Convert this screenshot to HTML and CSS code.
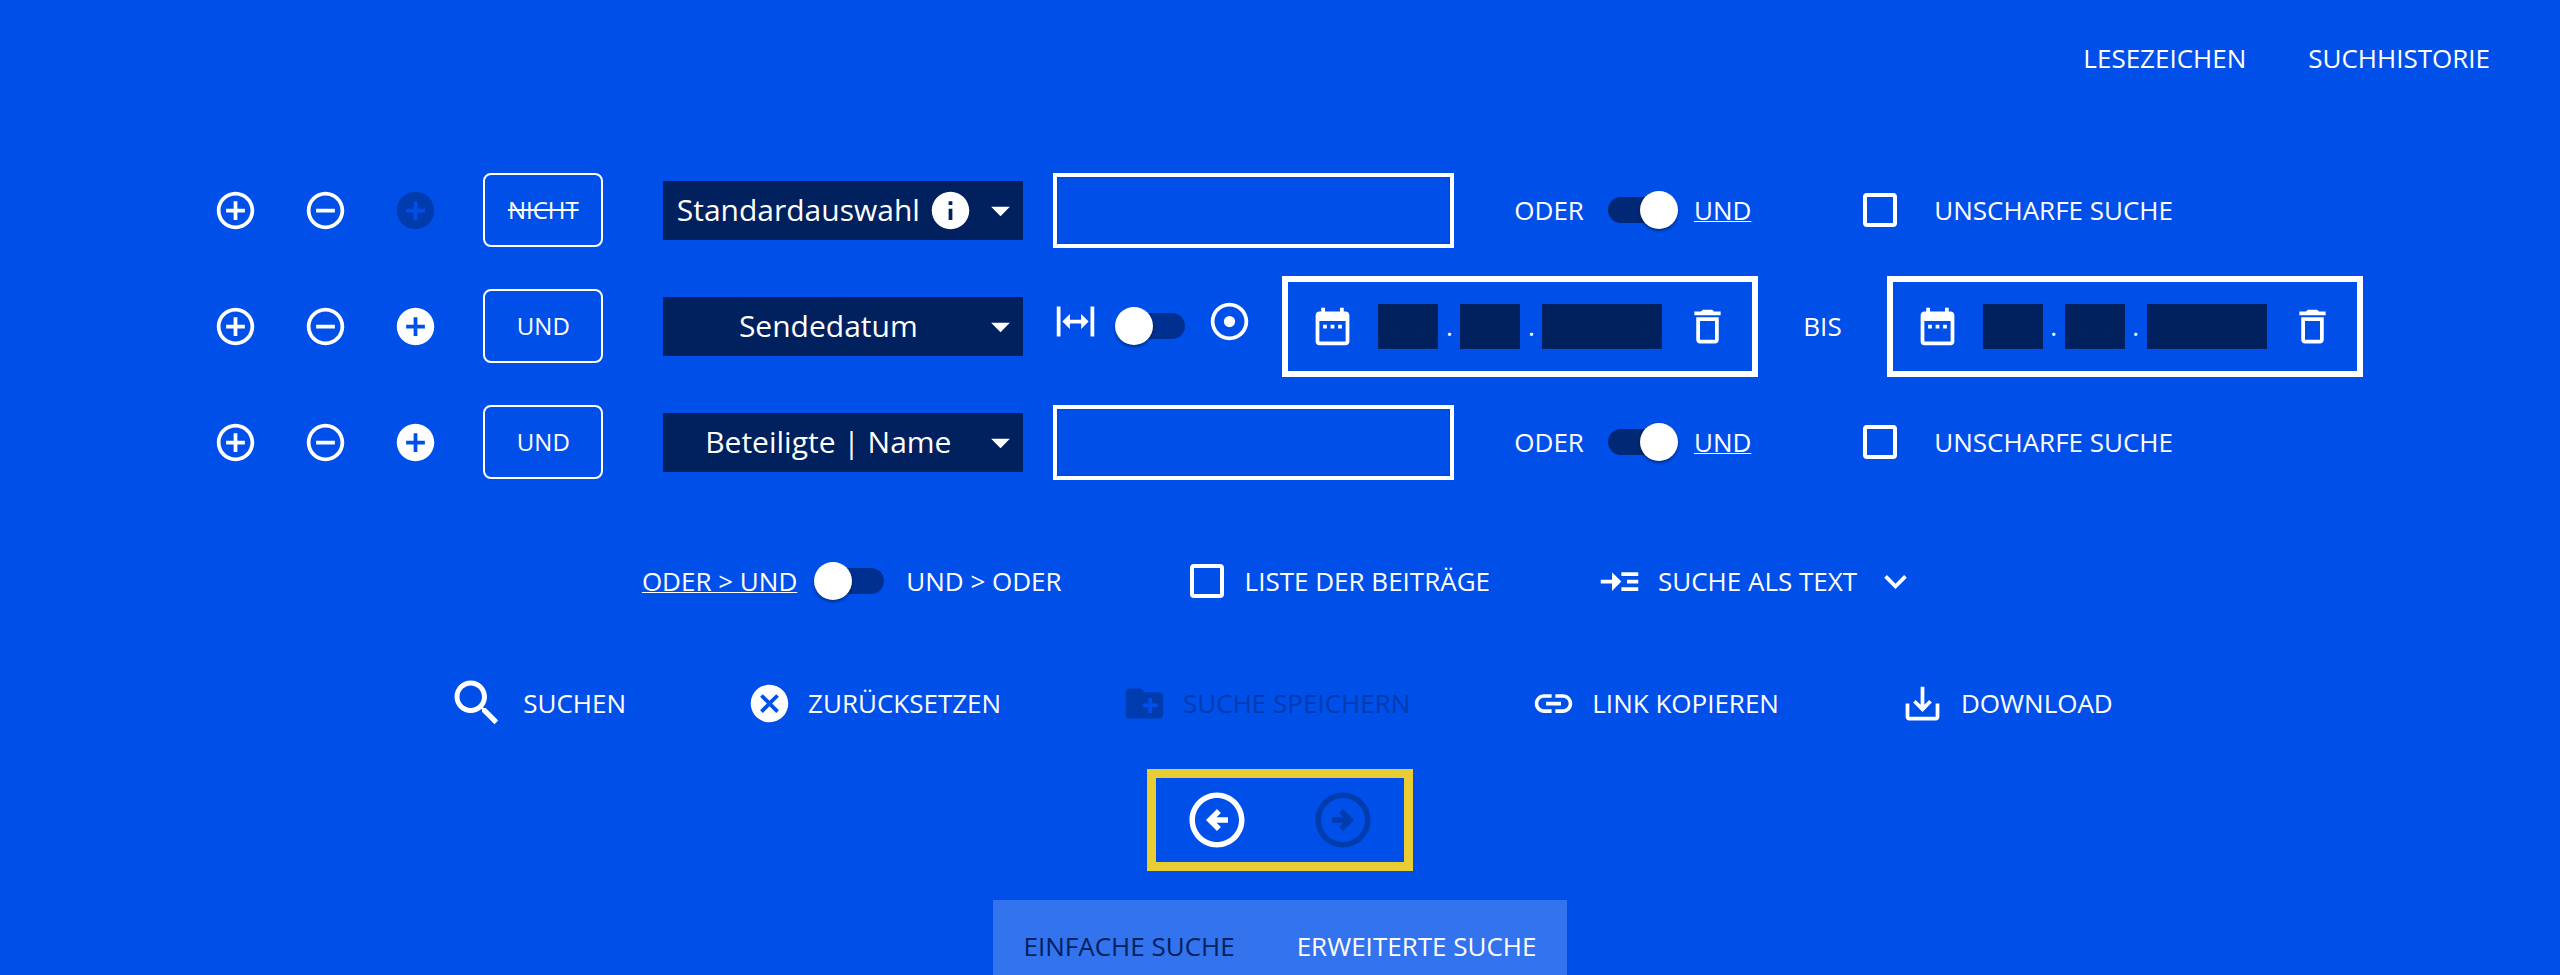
FILE: index.html
```html
<!DOCTYPE html>
<html lang="de">
<head>
    <meta charset="UTF-8">
    <meta name="viewport" content="width=device-width, initial-scale=1.0">
    <title>Erweiterte Suche</title>
    <link rel="stylesheet" href="styles.css">
</head>
<body>
    <svg class="sprite" aria-hidden="true">
        <symbol id="plus-outline" viewBox="0 0 24 24"><path d="M13 7h-2v4H7v2h4v4h2v-4h4v-2h-4V7zm-1-5C6.48 2 2 6.48 2 12s4.48 10 10 10 10-4.48 10-10S17.52 2 12 2zm0 18c-4.41 0-8-3.59-8-8s3.59-8 8-8 8 3.59 8 8-3.59 8-8 8z"/></symbol>
        <symbol id="minus-outline" viewBox="0 0 24 24"><path d="M7 11v2h10v-2H7zm5-9C6.48 2 2 6.48 2 12s4.48 10 10 10 10-4.48 10-10S17.52 2 12 2zm0 18c-4.41 0-8-3.59-8-8s3.59-8 8-8 8 3.59 8 8-3.59 8-8 8z"/></symbol>
        <symbol id="plus-filled" viewBox="0 0 24 24"><path d="M12 2C6.48 2 2 6.48 2 12s4.48 10 10 10 10-4.48 10-10S17.52 2 12 2zm5 11h-4v4h-2v-4H7v-2h4V7h2v4h4v2z"/></symbol>
        <symbol id="info" viewBox="0 0 24 24"><path d="M12 2C6.48 2 2 6.48 2 12s4.48 10 10 10 10-4.48 10-10S17.52 2 12 2zm1 15h-2v-6h2v6zm0-8h-2V7h2v2z"/></symbol>
        <symbol id="drop-down" viewBox="0 0 24 24"><path d="M7 10l5 5 5-5z"/></symbol>
        <symbol id="range" viewBox="0 0 24 24"><path d="M9 11h6V8l4 4-4 4v-3H9v3l-4-4 4-4v3zM2 20V4h2v16H2zm18 0V4h2v16h-2z"/></symbol>
        <symbol id="target" viewBox="0 0 24 24"><path d="M12 2C6.48 2 2 6.48 2 12s4.48 10 10 10 10-4.48 10-10S17.52 2 12 2zm0 18c-4.41 0-8-3.59-8-8s3.59-8 8-8 8 3.59 8 8-3.59 8-8 8z"/><circle cx="12" cy="12" r="3"/></symbol>
        <symbol id="calendar" viewBox="0 0 24 24"><path d="M9 11H7v2h2v-2zm4 0h-2v2h2v-2zm4 0h-2v2h2v-2zm2-7h-1V2h-2v2H8V2H6v2H5c-1.11 0-1.99.9-1.99 2L3 20c0 1.1.89 2 2 2h14c1.1 0 2-.9 2-2V6c0-1.1-.9-2-2-2zm0 16H5V9h14v11z"/></symbol>
        <symbol id="trash" viewBox="0 0 24 24"><path d="M6 19c0 1.1.9 2 2 2h8c1.1 0 2-.9 2-2V7H6v12zM8 9h8v10H8V9zm7.5-5l-1-1h-5l-1 1H5v2h14V4h-3.5z"/></symbol>
        <symbol id="as-text" viewBox="0 0 24 24"><path d="M22 7h-9v2h9V7zm0 8h-9v2h9v-2zm0-4h-6v2h6v-2zm-9 1L8 7v4H2v2h6v4l5-5z"/></symbol>
        <symbol id="chevron" viewBox="0 0 24 24"><path d="M16.59 8.59L12 13.17 7.41 8.59 6 10l6 6 6-6z"/></symbol>
        <symbol id="search" viewBox="0 0 24 24"><path d="M15.5 14h-.79l-.28-.27C15.41 12.59 16 11.11 16 9.5 16 5.91 13.09 3 9.5 3S3 5.91 3 9.5 5.91 16 9.5 16c1.61 0 3.09-.59 4.23-1.57l.27.28v.79l5 4.99L20.49 19l-4.99-5zm-6 0C7.01 14 5 11.99 5 9.5S7.01 5 9.5 5 14 7.01 14 9.5 11.99 14 9.5 14z"/></symbol>
        <symbol id="cancel" viewBox="0 0 24 24"><path d="M12 2C6.47 2 2 6.47 2 12s4.47 10 10 10 10-4.47 10-10S17.53 2 12 2zm5 13.59L15.59 17 12 13.41 8.41 17 7 15.59 10.59 12 7 8.41 8.41 7 12 10.59 15.59 7 17 8.41 13.41 12 17 15.59z"/></symbol>
        <symbol id="folder" viewBox="0 0 24 24"><path d="M20 6h-8l-2-2H4c-1.11 0-1.99.89-1.99 2L2 18c0 1.11.89 2 2 2h16c1.11 0 2-.89 2-2V8c0-1.11-.89-2-2-2zm-1 8h-3v3h-2v-3h-3v-2h3V9h2v3h3v2z"/></symbol>
        <symbol id="link" viewBox="0 0 24 24"><path d="M3.9 12c0-1.71 1.39-3.1 3.1-3.1h4V7H7c-2.76 0-5 2.24-5 5s2.24 5 5 5h4v-1.9H7c-1.71 0-3.1-1.39-3.1-3.1zM8 13h8v-2H8v2zm9-6h-4v1.9h4c1.71 0 3.1 1.39 3.1 3.1s-1.39 3.1-3.1 3.1h-4V17h4c2.76 0 5-2.24 5-5s-2.24-5-5-5z"/></symbol>
        <symbol id="download" viewBox="0 0 24 24"><path d="M19 12v7H5v-7H3v7c0 1.1.9 2 2 2h14c1.1 0 2-.9 2-2v-7h-2zm-6 .67l2.59-2.58L17 11.5l-5 5-5-5 1.41-1.41L11 12.67V3h2z"/></symbol>
        <symbol id="arrow-left" viewBox="0 0 24 24"><path d="M2 12c0 5.52 4.48 10 10 10s10-4.48 10-10S17.52 2 12 2 2 6.48 2 12zm18 0c0 4.42-3.58 8-8 8s-8-3.58-8-8 3.58-8 8-8 8 3.58 8 8zM8 12l4-4 1.41 1.41L11.83 11H16v2h-4.17l1.59 1.59L12 16l-4-4z"/></symbol>
        <symbol id="arrow-right" viewBox="0 0 24 24"><path d="M22 12c0-5.52-4.48-10-10-10S2 6.48 2 12s4.48 10 10 10 10-4.48 10-10zM4 12c0-4.42 3.58-8 8-8s8 3.58 8 8-3.58 8-8 8-8-3.58-8-8zm12 0l-4 4-1.41-1.41L12.17 13H8v-2h4.17l-1.59-1.59L12 8l4 4z"/></symbol>
    </svg>

    <nav class="top-nav">
        <a href="#lesezeichen">LESEZEICHEN</a>
        <a href="#suchhistorie">SUCHHISTORIE</a>
    </nav>

    <main>
        <form class="search-form" onsubmit="return false">
            <div class="row">
                <div class="row-buttons">
                    <button type="button" class="icon-btn" aria-label="Zeile hinzufügen"><svg><use href="#plus-outline"/></svg></button>
                    <button type="button" class="icon-btn" aria-label="Zeile entfernen"><svg><use href="#minus-outline"/></svg></button>
                    <button type="button" class="icon-btn" aria-label="Gruppe hinzufügen" disabled><svg><use href="#plus-filled"/></svg></button>
                </div>
                <button type="button" class="operator off">NICHT</button>
                <div class="field-select">
                    <select class="with-info" aria-label="Suchfeld 1"><option>Standardauswahl</option></select>
                    <svg class="info"><use href="#info"/></svg>
                    <svg class="arrow"><use href="#drop-down"/></svg>
                </div>
                <input type="text" class="term" aria-label="Suchbegriff 1">
                <div class="term-operator">
                    <label for="op1">ODER</label>
                    <input type="checkbox" class="switch" id="op1" checked>
                    <label for="op1" class="active">UND</label>
                </div>
                <div class="fuzzy">
                    <input type="checkbox" class="check" id="fuzzy1">
                    <label for="fuzzy1">UNSCHARFE SUCHE</label>
                </div>
            </div>

            <div class="row">
                <div class="row-buttons">
                    <button type="button" class="icon-btn" aria-label="Zeile hinzufügen"><svg><use href="#plus-outline"/></svg></button>
                    <button type="button" class="icon-btn" aria-label="Zeile entfernen"><svg><use href="#minus-outline"/></svg></button>
                    <button type="button" class="icon-btn" aria-label="Gruppe hinzufügen"><svg><use href="#plus-filled"/></svg></button>
                </div>
                <button type="button" class="operator">UND</button>
                <div class="field-select">
                    <select aria-label="Suchfeld 2"><option>Sendedatum</option></select>
                    <svg class="arrow"><use href="#drop-down"/></svg>
                </div>
                <div class="date-mode">
                    <svg><use href="#range"/></svg>
                    <input type="checkbox" class="switch" aria-label="Zeitraum oder Tag">
                    <svg><use href="#target"/></svg>
                </div>
                <div class="date-box">
                    <button type="button" class="icon-btn" aria-label="Kalender"><svg><use href="#calendar"/></svg></button>
                    <div class="date">
                        <input type="text" aria-label="Tag von"><span>.</span>
                        <input type="text" aria-label="Monat von"><span>.</span>
                        <input type="text" class="year" aria-label="Jahr von">
                    </div>
                    <button type="button" class="icon-btn" aria-label="Datum löschen"><svg><use href="#trash"/></svg></button>
                </div>
                <span class="until">BIS</span>
                <div class="date-box">
                    <button type="button" class="icon-btn" aria-label="Kalender"><svg><use href="#calendar"/></svg></button>
                    <div class="date">
                        <input type="text" aria-label="Tag bis"><span>.</span>
                        <input type="text" aria-label="Monat bis"><span>.</span>
                        <input type="text" class="year" aria-label="Jahr bis">
                    </div>
                    <button type="button" class="icon-btn" aria-label="Datum löschen"><svg><use href="#trash"/></svg></button>
                </div>
            </div>

            <div class="row">
                <div class="row-buttons">
                    <button type="button" class="icon-btn" aria-label="Zeile hinzufügen"><svg><use href="#plus-outline"/></svg></button>
                    <button type="button" class="icon-btn" aria-label="Zeile entfernen"><svg><use href="#minus-outline"/></svg></button>
                    <button type="button" class="icon-btn" aria-label="Gruppe hinzufügen"><svg><use href="#plus-filled"/></svg></button>
                </div>
                <button type="button" class="operator">UND</button>
                <div class="field-select">
                    <select aria-label="Suchfeld 3"><option>Beteiligte | Name</option></select>
                    <svg class="arrow"><use href="#drop-down"/></svg>
                </div>
                <input type="text" class="term" aria-label="Suchbegriff 3">
                <div class="term-operator">
                    <label for="op3">ODER</label>
                    <input type="checkbox" class="switch" id="op3" checked>
                    <label for="op3" class="active">UND</label>
                </div>
                <div class="fuzzy">
                    <input type="checkbox" class="check" id="fuzzy3">
                    <label for="fuzzy3">UNSCHARFE SUCHE</label>
                </div>
            </div>
        </form>

        <div class="options">
            <div class="precedence">
                <label for="precedence" class="active">ODER &gt; UND</label>
                <input type="checkbox" class="switch" id="precedence">
                <label for="precedence">UND &gt; ODER</label>
            </div>
            <div class="option">
                <input type="checkbox" class="check" id="list">
                <label for="list">LISTE DER BEITRÄGE</label>
            </div>
            <button type="button" class="action">
                <svg><use href="#as-text"/></svg>
                SUCHE ALS TEXT
                <svg><use href="#chevron"/></svg>
            </button>
        </div>

        <div class="actions">
            <button type="button" class="action"><svg class="large"><use href="#search"/></svg>SUCHEN</button>
            <button type="button" class="action"><svg><use href="#cancel"/></svg>ZURÜCKSETZEN</button>
            <button type="button" class="action" disabled><svg><use href="#folder"/></svg>SUCHE SPEICHERN</button>
            <button type="button" class="action"><svg><use href="#link"/></svg>LINK KOPIEREN</button>
            <button type="button" class="action"><svg><use href="#download"/></svg>DOWNLOAD</button>
        </div>

        <div class="history">
            <button type="button" class="icon-btn" aria-label="Zurück"><svg><use href="#arrow-left"/></svg></button>
            <button type="button" class="icon-btn" aria-label="Vor" disabled><svg><use href="#arrow-right"/></svg></button>
        </div>
    </main>

    <nav class="tabs">
        <a href="#einfach" class="inactive">EINFACHE SUCHE</a>
        <a href="#erweitert">ERWEITERTE SUCHE</a>
    </nav>
</body>
</html>
```

FILE: styles.css
```css
* {
    box-sizing: border-box;
}

body {
    margin: 0;
    background: #004fe9;
    color: #fff;
    font-family: 'Open Sans', 'Noto Sans', sans-serif;
    font-size: 26px;
    line-height: 36px;
}

a {
    color: inherit;
    text-decoration: none;
}

button,
input,
select {
    margin: 0;
    padding: 0;
    border: none;
    border-radius: 0;
    background: none;
    color: inherit;
    font: inherit;
}

button,
label,
select {
    cursor: pointer;
}

svg {
    display: block;
    flex: none;
    width: 45px;
    height: 45px;
    fill: currentColor;
}

.sprite {
    position: absolute;
    width: 0;
    height: 0;
}

button:disabled {
    color: #003cae;
    cursor: default;
}

.top-nav {
    display: flex;
    justify-content: flex-end;
    gap: 62px;
    padding: 40px 70px;
}

.search-form {
    width: fit-content;
    margin: 36px auto 0;
    padding-left: 16px;
}

.row {
    display: flex;
    align-items: center;
    min-height: 116px;
}

.row-buttons {
    display: flex;
    gap: 45px;
}

.operator {
    width: 120px;
    height: 74px;
    margin: 0 60px 0 45px;
    border: 2px solid #fff;
    border-radius: 8px;
    font-size: 24px;
}

.operator.off {
    text-decoration: line-through;
}

.field-select {
    position: relative;
    width: 360px;
    margin-right: 30px;
    background: #00205e;
}

.field-select select {
    display: block;
    width: 100%;
    height: 59px;
    padding-right: 30px;
    appearance: none;
    font-size: 30px;
    text-align: center;
    text-align-last: center;
}

.field-select select.with-info {
    padding-right: 90px;
}

.field-select svg {
    position: absolute;
    top: 7px;
    pointer-events: none;
}

.field-select .arrow {
    right: 0;
}

.field-select .info {
    right: 50px;
}

.term {
    width: 401px;
    height: 75px;
    padding: 0 15px;
    border: 4px solid #fff;
    box-shadow: inset 0 0 2px #003cae;
}

.term-operator {
    display: flex;
    align-items: center;
    margin: 0 112px 0 60px;
}

.term-operator .switch {
    margin: 0 16px 0 24px;
}

.active {
    text-decoration: underline;
    text-decoration-thickness: 1px;
}

.switch {
    display: grid;
    align-items: center;
    width: 70px;
    height: 38px;
    appearance: none;
    cursor: pointer;
}

.switch::before,
.switch::after {
    content: '';
    grid-area: 1 / 1;
}

.switch::before {
    justify-self: end;
    width: 60px;
    height: 26px;
    border-radius: 13px;
    background: #00308f;
}

.switch::after {
    width: 38px;
    height: 38px;
    border-radius: 50%;
    background: #fff;
    box-shadow: 0 2px 3px rgba(0, 0, 0, 0.4);
}

.switch:checked::before {
    justify-self: start;
    background: #002874;
}

.switch:checked::after {
    justify-self: end;
}

.check {
    width: 34px;
    height: 34px;
    border: 4px solid #fff;
    border-radius: 4px;
    appearance: none;
    cursor: pointer;
}

.check:checked {
    background: #fff;
}

.fuzzy {
    display: flex;
    align-items: center;
    gap: 37px;
}

.date-mode {
    display: flex;
    align-items: center;
    margin-right: 30px;
}

.date-mode svg {
    margin-bottom: 9px;
}

.date-mode .switch {
    margin: 0 22px 0 17px;
}

.date-box {
    display: flex;
    gap: 23px;
    padding: 22px;
    border: 6px solid #fff;
}

.date {
    display: flex;
    align-items: center;
}

.date input {
    width: 60px;
    height: 45px;
    background: #00205e;
    text-align: center;
}

.date input.year {
    width: 120px;
}

.date span {
    width: 22px;
    text-align: center;
}

.until {
    margin: 0 45px;
}

.options {
    display: flex;
    justify-content: center;
    align-items: center;
    min-height: 60px;
    margin-top: 51px;
}

.precedence,
.option {
    display: flex;
    align-items: center;
}

.precedence .switch {
    margin: 0 22px 0 17px;
}

.option {
    gap: 21px;
    margin: 0 107px 0 128px;
}

.action {
    display: flex;
    align-items: center;
    gap: 16px;
}

.actions {
    display: flex;
    justify-content: center;
    align-items: center;
    gap: 121px;
    margin-top: 62px;
}

.large {
    width: 60px;
    height: 60px;
}

.history {
    display: flex;
    gap: 60px;
    width: fit-content;
    margin: 36px auto 0;
    padding: 9px 28px;
    border: 9px solid #e9cd35;
}

.history svg {
    width: 66px;
    height: 66px;
}

.tabs {
    display: flex;
    gap: 62px;
    width: fit-content;
    margin: 29px auto 0;
    padding: 28px 31px 11px;
    background: #3373ed;
}

.inactive {
    color: #00205e;
}
```
